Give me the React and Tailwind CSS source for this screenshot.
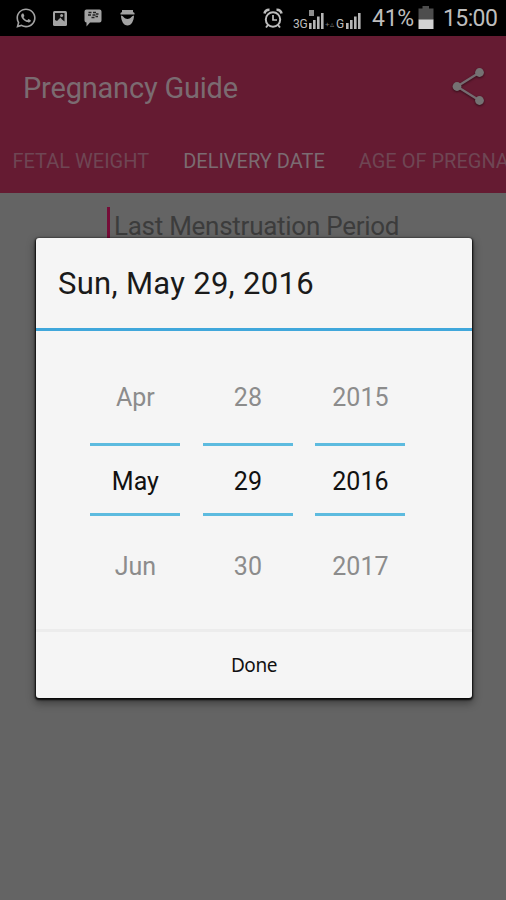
import React from 'react';
import { FaWhatsapp } from 'react-icons/fa';

const tabs = [
  { label: 'FETAL WEIGHT', active: false },
  { label: 'DELIVERY DATE', active: true },
  { label: 'AGE OF PREGNANCY', active: false },
];

const pickerColumns = [
  { id: 'month', values: ['Apr', 'May', 'Jun'] },
  { id: 'day', values: ['28', '29', '30'] },
  { id: 'year', values: ['2015', '2016', '2017'] },
];

// --- Status bar icons ---
function PictureIcon() {
  return (
    <svg width="14" height="15" viewBox="0 0 14 15">
      <rect width="14" height="15" rx="1.5" fill="#a3a3a3" />
      <path d="M2 2h9.5v8.5L9 8.5 7.5 6.5 4 10 2 9z" fill="#111" />
      <circle cx="8.6" cy="4.4" r="1.5" fill="#a3a3a3" />
    </svg>
  );
}

function MessengerIcon() {
  return (
    <svg width="18" height="18" viewBox="0 0 18 18">
      <path d="M2.5.5h13a2 2 0 0 1 2 2v9a2 2 0 0 1-2 2H6L2.5 17.500V13.500a2 2 0 0 1-2-2v-9a2 2 0 0 1 2-2z" fill="#a3a3a3" />
      <path d="M4.500 3.500h3M9 3.500h3M4 6h3M8.500 6h3M12 5h2.500M7.500 8.500h3M11.500 7.500h2.500" stroke="#222" strokeWidth="1.500" />
    </svg>
  );
}

function IncognitoIcon() {
  return (
    <svg width="15" height="16" viewBox="0 0 15 16" fill="#a3a3a3">
      <path d="M2 0h11v2l1.500 1v1.500H.5V3L2 2z" />
      <path d="M1 5.500c2 0 3.300 3.500 6.500 3.500S12 5.500 14 5.500c0 5-2.500 10-6.500 10S1 10.500 1 5.500z" />
    </svg>
  );
}

function AlarmIcon() {
  return (
    <svg width="20" height="21" viewBox="0 0 20 21" fill="none" stroke="#bdbdbd" strokeWidth="2">
      <circle cx="10" cy="11.500" r="7.200" />
      <path d="M10 7v5h4" strokeWidth="1.700" />
      <path d="M1.500 5.500C2 3 4 1.600 6.500 1.700M18.500 5.500C18 3 16 1.600 13.500 1.700" strokeWidth="2.600" />
      <path d="M5 17l-2 2.500M15 17l2 2.500" />
    </svg>
  );
}

function SignalBars({ className }) {
  return (
    <svg className={className} width="15" height="17" viewBox="0 0 15 17" fill="#b5b5b5">
      <rect x="0" y="11" width="2.600" height="6" />
      <rect x="4" y="8" width="2.600" height="9" />
      <rect x="8" y="4.500" width="2.600" height="12.500" />
      <rect x="12" y="1" width="2.600" height="16" />
    </svg>
  );
}

function BatteryIcon() {
  return (
    <svg className="mb-px" width="16" height="23" viewBox="0 0 16 23">
      <path d="M4.500 0h6.500v2.500H15.500V14H.5V2.500h4z" fill="#4d4d4d" />
      <rect x=".5" y="13.500" width="15" height="9.500" fill="#d2d2d2" />
    </svg>
  );
}

function ShareIcon() {
  return (
    <svg width="34" height="40" viewBox="0 0 34 40" className="drop-shadow-[0_1px_1px_rgba(0,0,0,0.5)]">
      <path d="M27.500 5.500L5 19.500l22.500 14" fill="none" stroke="#756c71" strokeWidth="2.200" />
      <g fill="#757273">
        <circle cx="27.500" cy="5.500" r="4.400" />
        <circle cx="5" cy="19.500" r="4.400" />
        <circle cx="27.500" cy="33.500" r="4.400" />
      </g>
    </svg>
  );
}

function StatusBar() {
  return (
    <div className="flex h-9 items-center bg-black pl-[15px] text-[#bdbdbd]">
      <FaWhatsapp size={22} color="#a3a3a3" />
      <div className="ml-4"><PictureIcon /></div>
      <div className="ml-[17px]"><MessengerIcon /></div>
      <div className="ml-[18px]"><IncognitoIcon /></div>
      <div className="ml-[128px]"><AlarmIcon /></div>
      <div className="ml-[10px] mt-[12px] w-[16px] text-[12px] leading-3 tracking-tight">3G</div>
      <div className="relative mt-[4px]">
        <SignalBars />
        <span className="absolute -top-[2px] left-0 h-[6px] w-[5px] bg-[#8d8d8d]" />
      </div>
      <div className="mt-[13px] w-[12px] pl-px text-[8px] leading-3 text-[#777]">+▵</div>
      <div className="mt-[12px] w-[10px] text-[12px] leading-3">G</div>
      <SignalBars className="mt-[4px]" />
      <span className="ml-[11px] w-[46px] pt-[2px] text-[23px] leading-9 tracking-[-0.3px]">41%</span>
      <BatteryIcon />
      <span className="ml-[9px] pt-[2px] text-[23px] leading-9 tracking-[-0.6px]">15:00</span>
    </div>
  );
}

function AppHeader() {
  return (
    <header className="h-[157px] overflow-hidden bg-[#651b32]">
      <div className="flex h-[102px] items-center justify-between pl-[23px] pr-[20px]">
        <h1 className="pt-[3px] text-[29px] tracking-[-0.2px] text-[#7b6b71]">Pregnancy Guide</h1>
        <ShareIcon />
      </div>
      <nav className="flex h-[44px] items-center gap-[34px] whitespace-nowrap pl-[12.500px] pt-px text-[20px]">
        {tabs.map((tab) => (
          <span key={tab.label} className={tab.active ? 'text-[#7b6b71]' : 'text-[#6f4654]'}>
            {tab.label}
          </span>
        ))}
      </nav>
    </header>
  );
}

function PickerColumn({ values }) {
  const [previous, current, next] = values;
  return (
    <div className="w-[90px] text-center text-[25px]">
      <div className="flex h-[92px] items-center justify-center pt-[2px] text-[#8c8c8c]">{previous}</div>
      <div className="flex h-[73px] items-center justify-center border-y-[3px] border-[#5dbbdf] pt-[5px] text-[#111]">
        {current}
      </div>
      <div className="flex h-[98px] items-center justify-center pt-[3px] text-[#8c8c8c]">{next}</div>
    </div>
  );
}

function DateDialog() {
  return (
    <div className="absolute left-[36px] top-[238px] h-[460px] w-[436px] rounded-[3px] bg-[#f5f5f5] shadow-[0_1px_2px_1px_rgba(0,0,0,0.9),0_4px_8px_1px_rgba(0,0,0,0.4)]">
      <div className="flex h-[93px] items-center border-b-[3px] border-[#40a7db] pl-[22px] pt-[3px] text-[31px] tracking-[0.3px] text-[#1a1a1a]">
        Sun, May 29, 2016
      </div>
      <div className="flex h-[298px] gap-[22.500px] pl-[54.400px] pt-[20px]">
        {pickerColumns.map((column) => (
          <PickerColumn key={column.id} values={column.values} />
        ))}
      </div>
      <button className="h-[69px] w-full border-t-[3px] border-[#ececec] font-['Noto_Sans',sans-serif] text-[19px] tracking-[-0.4px] text-[#111]">
        Done
      </button>
    </div>
  );
}

export default function App() {
  return (
    <div className="relative h-[900px] w-[506px] overflow-hidden bg-[#646464] font-[Roboto,sans-serif]">
      <StatusBar />
      <AppHeader />
      <div className="ml-[107px] mt-[14px] flex h-[38px] items-center border-l-[3px] border-[#750c37] pl-[4px] text-[26px] tracking-[-0.27px] text-[#3c3c3c]">
        Last Menstruation Period
      </div>
      <DateDialog />
    </div>
  );
}
